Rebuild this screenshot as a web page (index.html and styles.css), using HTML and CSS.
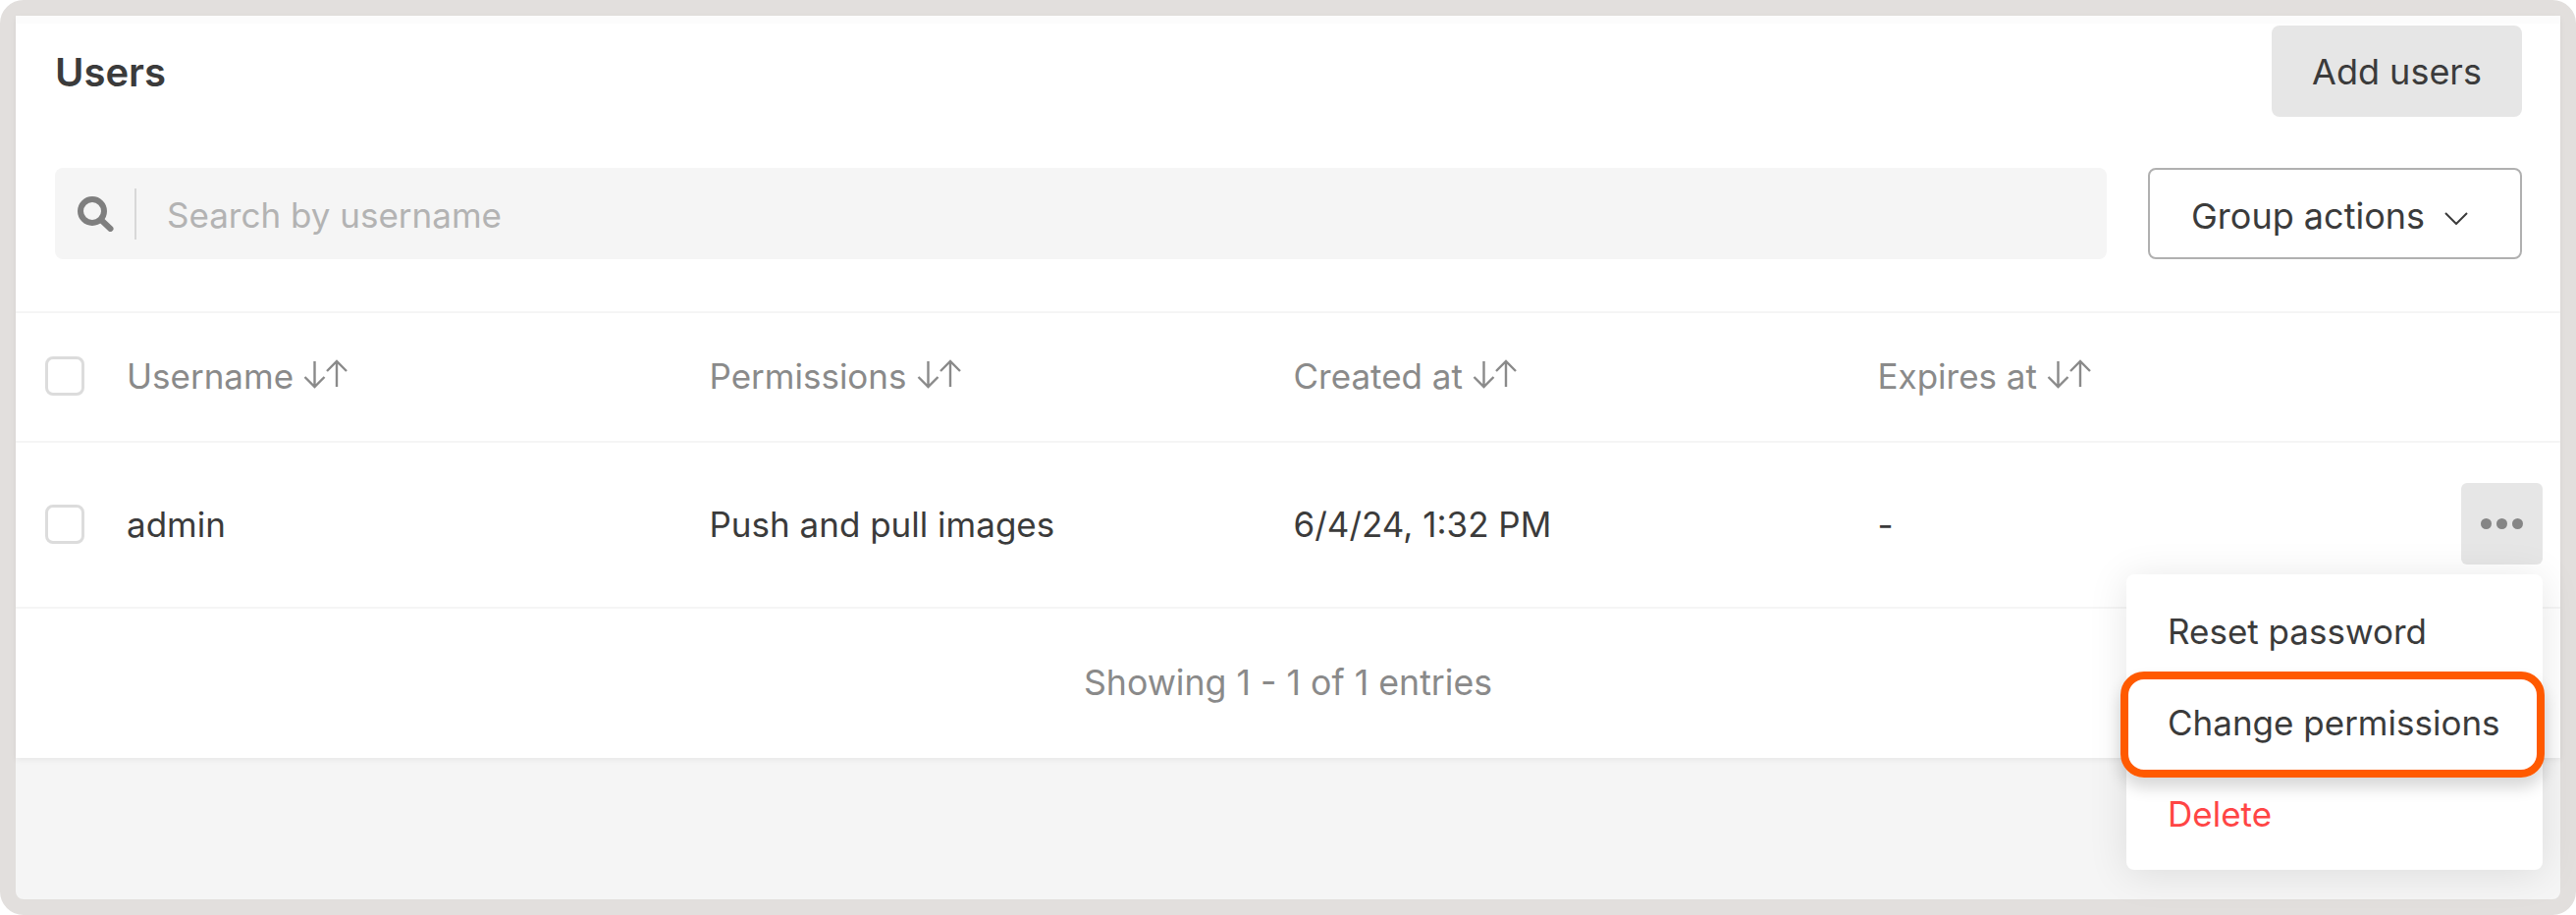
FILE: index.html
```html
<!DOCTYPE html>
<html lang="en">

<head>
  <meta charset="UTF-8">
  <title>Users</title>
  <link rel="stylesheet" href="styles.css">
</head>

<body>
  <div class="frame">
    <section class="card">
      <div class="title-row">
        <h1 class="title">Users</h1>
        <button class="btn-add">Add users</button>
      </div>

      <div class="search-row">
        <div class="search">
          <svg class="search-icon" width="37" height="36" viewBox="0 0 37 36">
            <circle cx="15" cy="15" r="12" fill="none" stroke="#7f7f7f" stroke-width="6" />
            <line x1="24" y1="24" x2="33.5" y2="33" stroke="#7f7f7f" stroke-width="6" stroke-linecap="round" />
          </svg>
          <span class="search-text">Search by username</span>
        </div>
        <button class="btn-group">
          Group actions
          <svg width="24" height="13" viewBox="0 0 24 13">
            <path d="M1 1 L12 12 L23 1" fill="none" stroke="#3b3b3b" stroke-width="2" />
          </svg>
        </button>
      </div>

      <div class="row row-head">
        <span class="check"></span>
        <span class="head-cell">Username
          <svg class="sort" width="46" height="30" viewBox="0 0 46 30">
            <path d="M11.5 2 V28 M1.5 18 L11.5 28 L21.5 18 M34 28 V2 M24 12 L34 2 L44 12" fill="none" stroke="#8a8a8a" stroke-width="2.4" />
          </svg>
        </span>
        <span class="head-cell">Permissions
          <svg class="sort" width="46" height="30" viewBox="0 0 46 30">
            <path d="M11.5 2 V28 M1.5 18 L11.5 28 L21.5 18 M34 28 V2 M24 12 L34 2 L44 12" fill="none" stroke="#8a8a8a" stroke-width="2.4" />
          </svg>
        </span>
        <span class="head-cell">Created at
          <svg class="sort" width="46" height="30" viewBox="0 0 46 30">
            <path d="M11.5 2 V28 M1.5 18 L11.5 28 L21.5 18 M34 28 V2 M24 12 L34 2 L44 12" fill="none" stroke="#8a8a8a" stroke-width="2.4" />
          </svg>
        </span>
        <span class="head-cell">Expires at
          <svg class="sort" width="46" height="30" viewBox="0 0 46 30">
            <path d="M11.5 2 V28 M1.5 18 L11.5 28 L21.5 18 M34 28 V2 M24 12 L34 2 L44 12" fill="none" stroke="#8a8a8a" stroke-width="2.4" />
          </svg>
        </span>
      </div>

      <div class="row row-user">
        <span class="check"></span>
        <span>admin</span>
        <span>Push and pull images</span>
        <span>6/4/24, 1:32 PM</span>
        <span>-</span>
        <div class="more-wrap">
          <button class="btn-more"><i></i><i></i><i></i></button>
          <ul class="menu">
            <li>Reset password</li>
            <li>Change permissions</li>
            <li class="danger">Delete</li>
          </ul>
          <div class="highlight"></div>
        </div>
      </div>

      <div class="table-foot">Showing 1 - 1 of 1 entries</div>
    </section>
  </div>
</body>

</html>
```

FILE: styles.css
```css
* {
  box-sizing: border-box;
}

body {
  margin: 0;
  background: #fff;
  font-family: Inter, "Liberation Sans", sans-serif;
  font-size: 35px;
  color: #3b3b3b;
}

button {
  font: inherit;
  color: inherit;
}

.frame {
  height: 932px;
  border: 16px solid #e2dfdd;
  border-radius: 24px;
  background: #f5f5f5;
}

.card {
  background: #fff;
  border-top: 8px solid #fcfcfc;
  box-shadow: 0 2px 6px rgba(0, 0, 0, 0.06);
}

.title-row {
  display: flex;
  justify-content: space-between;
  align-items: center;
  padding: 2px 39px 0 40px;
}

.title {
  margin: 2px 0 0;
  font-size: 40px;
  font-weight: 600;
}

.btn-add {
  width: 255px;
  height: 93px;
  border: 0;
  border-radius: 8px;
  background: #e6e6e6;
  font-size: 36px;
}

.search-row {
  display: flex;
  gap: 42px;
  margin-top: 52px;
  padding: 0 39px 0 40px;
}

.search {
  flex: 1;
  display: flex;
  align-items: center;
  height: 93px;
  padding-left: 23px;
  border-radius: 8px;
  background: #f5f5f5;
}

.search-icon {
  margin-right: 21px;
}

.search-text {
  height: 52px;
  padding-left: 31px;
  border-left: 2px solid #d8d8d8;
  line-height: 54px;
  color: #b3b3b3;
}

.btn-group {
  display: flex;
  align-items: center;
  gap: 20px;
  width: 381px;
  height: 93px;
  padding: 4px 0 0 42px;
  border: 2px solid #b0b0b0;
  border-radius: 8px;
  background: #fff;
  font-size: 36px;
}

.btn-group svg {
  margin-top: 6px;
}

.row {
  display: grid;
  grid-template-columns: 83px 593.5px 595px 595px 1fr auto;
  align-items: center;
  padding-left: 30px;
  border-top: 2px solid #f5f5f5;
}

.row-head {
  height: 132px;
  margin-top: 53px;
  padding-bottom: 2px;
  color: #8a8a8a;
}

.row-user {
  height: 169px;
  padding-right: 18px;
  padding-bottom: 2px;
}

.head-cell {
  display: flex;
  align-items: center;
  gap: 10px;
}

.sort {
  margin-top: -4px;
}

.check {
  width: 40px;
  height: 40px;
  border: 3px solid #dcdcdc;
  border-radius: 8px;
}

.more-wrap {
  position: relative;
}

.btn-more {
  display: flex;
  justify-content: center;
  align-items: center;
  gap: 5px;
  width: 83px;
  height: 83px;
  border: 0;
  border-radius: 6px;
  background: #e6e6e6;
}

.btn-more i {
  width: 11px;
  height: 11px;
  border-radius: 50%;
  background: #858585;
}

.menu {
  position: absolute;
  top: calc(100% + 10px);
  right: 0;
  z-index: 5;
  width: 424px;
  height: 301px;
  margin: 0;
  padding: 12px 0 0;
  list-style: none;
  border-radius: 8px;
  background: #fff;
  box-shadow: 0 4px 40px rgba(0, 0, 0, 0.1);
}

.menu li {
  height: 93px;
  padding-left: 42px;
  line-height: 93px;
}

.menu .danger {
  color: #ff4545;
}

.highlight {
  position: absolute;
  top: 192px;
  right: -2px;
  z-index: 6;
  width: 432px;
  height: 108px;
  border: 8px solid #ff5a00;
  border-radius: 24px;
  box-shadow: 0 10px 16px rgba(0, 0, 0, 0.16);
}

.table-foot {
  display: flex;
  justify-content: center;
  align-items: center;
  height: 154px;
  padding-bottom: 3px;
  border-top: 2px solid #f5f5f5;
  font-size: 35.7px;
  color: #8a8a8a;
}
```
